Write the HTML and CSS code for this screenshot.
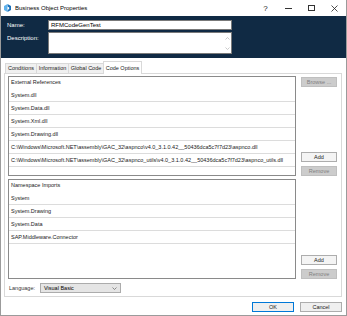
FILE: index.html
```html
<!DOCTYPE html>
<html lang="en">
<head>
  <meta charset="UTF-8">
  <title>Business Object Properties</title>
  <link rel="stylesheet" href="styles.css">
</head>
<body>

<div class="window">
  <div class="titlebar">
    <svg class="app-icon" viewBox="0 0 7 8">
      <polygon points="3.5,0 7,2 7,6 3.5,8" fill="#1b6fb8"/>
      <polygon points="3.5,0 0,2 0,6 3.5,8" fill="#5fb2ec"/>
      <polygon points="3.5,2.5 5.2,3.5 5.2,5 3.5,6" fill="#fff"/>
    </svg>
    <span class="title">Business Object Properties</span>
    <div class="caption-buttons">
      <span class="cap">?</span>
      <span class="cap"><span class="min-line"></span></span>
      <span class="cap"><span class="max-box"></span></span>
      <span class="cap">
        <svg width="7" height="7" viewBox="0 0 7 7"><path d="M0.5 0.5 L6.5 6.5 M6.5 0.5 L0.5 6.5" stroke="#222" stroke-width="0.8"/></svg>
      </span>
    </div>
  </div>

  <div class="header">
    <div class="field-row">
      <span class="field-label">Name:</span>
      <div class="text-box">RFMCodeGenTest</div>
    </div>
    <div class="field-row">
      <span class="field-label desc">Description:</span>
      <div class="text-area">
        <div class="scroll-arrows">
          <svg width="5" height="3" viewBox="0 0 5 3"><path d="M0.5 2.5 L2.5 0.5 L4.5 2.5" fill="none" stroke="#b5b5b5" stroke-width="0.7"/></svg>
          <svg width="5" height="3" viewBox="0 0 5 3"><path d="M0.5 0.5 L2.5 2.5 L4.5 0.5" fill="none" stroke="#b5b5b5" stroke-width="0.7"/></svg>
        </div>
      </div>
    </div>
  </div>

  <div class="content">
    <div class="tabs">
      <div class="tab w-conditions">Conditions</div>
      <div class="tab w-information">Information</div>
      <div class="tab w-global">Global Code</div>
      <div class="tab active w-options">Code Options</div>
    </div>

    <div class="tab-panel">
      <div class="list-group">
        <div class="list">
          <div class="list-head">External References</div>
          <div class="list-row">System.dll</div>
          <div class="list-row">System.Data.dll</div>
          <div class="list-row">System.Xml.dll</div>
          <div class="list-row">System.Drawing.dll</div>
          <div class="list-row">C:\Windows\Microsoft.NET\assembly\GAC_32\aspnco\v4.0_3.1.0.42__50436dca5c7f7d23\aspnco.dll</div>
          <div class="list-row">C:\Windows\Microsoft.NET\assembly\GAC_32\aspnco_utils\v4.0_3.1.0.42__50436dca5c7f7d23\aspnco_utils.dll</div>
        </div>
        <div class="list-buttons">
          <div class="btn disabled">Browse ...</div>
          <div class="btn push">Add</div>
          <div class="btn disabled">Remove</div>
        </div>
      </div>

      <div class="list-group second">
        <div class="list">
          <div class="list-head">Namespace Imports</div>
          <div class="list-row">System</div>
          <div class="list-row">System.Drawing</div>
          <div class="list-row">System.Data</div>
          <div class="list-row">SAP.Middleware.Connector</div>
        </div>
        <div class="list-buttons">
          <div class="btn push">Add</div>
          <div class="btn disabled">Remove</div>
        </div>
      </div>

      <div class="language-row">
        <span class="language-label">Language:</span>
        <div class="select">
          <span>Visual Basic</span>
          <svg width="5" height="3" viewBox="0 0 5 3"><path d="M0.5 0.5 L2.5 2.5 L4.5 0.5" fill="none" stroke="#666" stroke-width="0.7"/></svg>
        </div>
      </div>
    </div>

    <div class="dialog-buttons">
      <div class="btn dialog default">OK</div>
      <div class="btn dialog">Cancel</div>
    </div>
  </div>
</div>

</body>
</html>
```

FILE: styles.css
```css
* {
  box-sizing: border-box;
}

body {
  margin: 0;
  font-family: "Liberation Sans", Arial, sans-serif;
  font-size: 5.5px;
  color: #1a1a1a;
  background: #fff;
}

.window {
  width: 347px;
  height: 316px;
  border: 1px solid #9b9b9b;
  border-top: none;
  display: flex;
  flex-direction: column;
  background: #fff;
}

/* title bar */
.titlebar {
  height: 16px;
  display: flex;
  align-items: center;
  padding-left: 3px;
}

.app-icon {
  width: 7px;
  height: 8px;
  margin-right: 4px;
}

.title {
  color: #000;
  font-size: 6px;
}

.caption-buttons {
  margin-left: auto;
  display: flex;
  height: 16px;
}

.cap {
  width: 23px;
  display: flex;
  align-items: center;
  justify-content: center;
  font-size: 8px;
  color: #222;
}

.min-line {
  width: 7px;
  height: 1px;
  background: #333;
}

.max-box {
  width: 7px;
  height: 6px;
  border: 1px solid #333;
}

/* navy header */
.header {
  background: #102a44;
  padding: 4px 0 4px 6px;
  display: flex;
  flex-direction: column;
  gap: 2px;
}

.field-row {
  display: flex;
  align-items: flex-start;
}

.field-label {
  width: 41px;
  color: #fff;
  line-height: 10px;
  font-size: 6px;
}

.field-label.desc {
  padding-top: 1px;
}

.text-box {
  width: 184px;
  height: 10px;
  background: #fff;
  border: 1px solid #7a7a7a;
  padding-left: 2px;
  line-height: 8px;
  color: #000;
  font-size: 6px;
}

.text-area {
  width: 184px;
  height: 22px;
  background: #fff;
  border: 1px solid #7a7a7a;
  display: flex;
  justify-content: flex-end;
}

.scroll-arrows {
  width: 8px;
  display: flex;
  flex-direction: column;
  justify-content: space-between;
  align-items: center;
  padding: 4px 0 3px;
}

.scroll-arrows svg {
  display: block;
}

/* dialog body */
.content {
  flex: 1;
  padding: 5px 4px 0 3px;
  display: flex;
  flex-direction: column;
}

.tabs {
  display: flex;
  height: 10px;
  padding-left: 1px;
}

.tab {
  height: 10px;
  border: 1px solid #d9d9d9;
  border-bottom: none;
  background: #f0f0f0;
  margin-right: -1px;
  line-height: 9px;
  text-align: center;
  color: #222;
}

.tab.active {
  background: #fff;
  height: 13px;
  margin-top: -2px;
  position: relative;
  z-index: 1;
  line-height: 12px;
}

.w-conditions { width: 32px; }
.w-information { width: 33px; }
.w-global { width: 36px; }
.w-options { width: 39px; }

.tab-panel {
  height: 224px;
  border: 1px solid #d9d9d9;
  padding: 2px 3px 0 3px;
  display: flex;
  flex-direction: column;
}

.list-group {
  display: flex;
  gap: 5px;
  height: 100px;
}

.list-group.second {
  margin-top: 3px;
}

.list {
  width: 288px;
  border: 1px solid #8a8a8a;
  background: #fff;
  overflow: hidden;
}

.list-head {
  height: 12px;
  line-height: 11px;
  padding-left: 2px;
  white-space: nowrap;
}

.list-row {
  height: 13px;
  line-height: 12px;
  padding-left: 2px;
  border-bottom: 1px solid #dcdcdc;
  white-space: nowrap;
}

.list-buttons {
  width: 36px;
  display: flex;
  flex-direction: column;
  justify-content: flex-end;
  gap: 4px;
}

.list-buttons .disabled:first-child {
  margin-top: 1px;
  margin-bottom: auto;
}

.btn {
  height: 10px;
  line-height: 8px;
  text-align: center;
  border: 1px solid #adadad;
  background: #f4f4f4;
  color: #1a1a1a;
}

.btn.disabled {
  background: #cccccc;
  border-color: #bfbfbf;
  color: #7f7f7f;
}

.language-row {
  display: flex;
  align-items: center;
  margin-top: 4px;
  padding-left: 1px;
}

.language-label {
  width: 31px;
  color: #333;
}

.select {
  width: 81px;
  height: 10px;
  border: 1px solid #acacac;
  background: #e5e5e5;
  display: flex;
  align-items: center;
  justify-content: space-between;
  padding: 0 3px 0 3px;
  color: #000;
}

.select svg {
  display: block;
}

.dialog-buttons {
  display: flex;
  justify-content: flex-end;
  gap: 6px;
  margin-top: 5px;
}

.btn.dialog {
  width: 42px;
  background: #efefef;
}

.btn.default {
  border-color: #0078d7;
}
```
